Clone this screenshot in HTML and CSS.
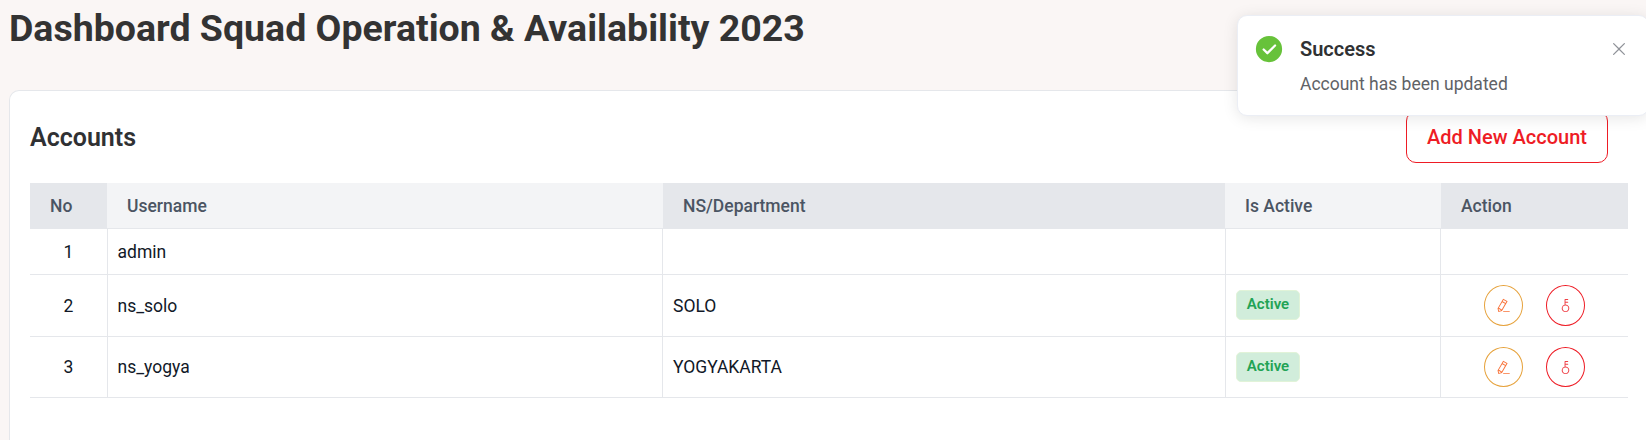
FILE: index.html
```html
<!DOCTYPE html>
<html lang="en">
<head>
<meta charset="utf-8">
<title>Dashboard Squad Operation &amp; Availability 2023</title>
<link rel="stylesheet" href="styles.css">
</head>
<body>
<svg class="sprite" aria-hidden="true">
  <symbol id="pen" viewBox="0 0 1024 1024"><path d="m199.04 672.64 193.984 112 224-387.968-193.92-112-224 388.032zm-23.872 60.16 32.896 148.288 144.896-45.696L175.168 732.8zM455.04 229.248l193.92 112 56.704-98.112-193.984-112-56.64 98.112zM104.32 708.8l384-665.024 304.768 175.936L409.152 884.8h.064l-248.448 78.336L104.32 708.8zm384 254.272v-64h448v64h-448z"/></symbol>
  <symbol id="key" viewBox="0 0 1024 1024"><path d="M448 456.064V96a32 32 0 0 1 32-32.064L672 64a32 32 0 0 1 0 64H512v128h160a32 32 0 0 1 0 64H512v128a256 256 0 1 1-64 8.064zM512 896a192 192 0 1 0 0-384 192 192 0 0 0 0 384z"/></symbol>
</svg>
<main class="page">
  <h1 class="page-title">Dashboard Squad Operation &amp; Availability 2023</h1>
  <section class="panel">
    <header class="panel-head">
      <h2 class="panel-title">Accounts</h2>
      <button class="add-button">Add New Account</button>
    </header>
    <table class="accounts">
      <colgroup><col class="c-no"><col class="c-user"><col class="c-dept"><col class="c-active"><col class="c-action"></colgroup>
      <thead>
        <tr><th>No</th><th>Username</th><th>NS/Department</th><th>Is Active</th><th>Action</th></tr>
      </thead>
      <tbody>
        <tr class="row-first"><td>1</td><td>admin</td><td></td><td></td><td></td></tr>
        <tr class="row-second"><td>2</td><td>ns_solo</td><td>SOLO</td><td><span class="tag">Active</span></td>
          <td><div class="actions"><button class="round edit" aria-label="Edit"><svg><use href="#pen"/></svg></button><button class="round reset" aria-label="Reset password"><svg><use href="#key"/></svg></button></div></td></tr>
        <tr class="row-third"><td>3</td><td>ns_yogya</td><td>YOGYAKARTA</td><td><span class="tag">Active</span></td>
          <td><div class="actions"><button class="round edit" aria-label="Edit"><svg><use href="#pen"/></svg></button><button class="round reset" aria-label="Reset password"><svg><use href="#key"/></svg></button></div></td></tr>
      </tbody>
    </table>
  </section>
</main>
<aside class="toast" role="alert">
  <svg class="toast-icon" viewBox="0 0 1024 1024"><path d="M512 64a448 448 0 1 1 0 896 448 448 0 0 1 0-896zm-55.808 536.384-99.52-99.584a38.4 38.4 0 1 0-54.336 54.336l126.72 126.72a38.272 38.272 0 0 0 54.336 0l262.4-262.464a38.4 38.4 0 1 0-54.272-54.336L456.192 600.384z"/></svg>
  <div class="toast-body">
    <h3 class="toast-title">Success</h3>
    <p class="toast-text">Account has been updated</p>
  </div>
  <svg class="toast-close" viewBox="0 0 1024 1024"><path d="M764.288 214.592 512 466.88 259.712 214.592a31.936 31.936 0 0 0-45.12 45.12L466.752 512 214.528 764.224a31.936 31.936 0 1 0 45.12 45.184L512 557.184l252.288 252.288a31.936 31.936 0 0 0 45.12-45.12L557.12 512.064l252.288-252.352a31.936 31.936 0 1 0-45.12-45.184z"/></svg>
</aside>
</body>
</html>
```
FILE: styles.css
```css
* { box-sizing: border-box; margin: 0; }
html { height: 100%; overflow: hidden; }
body {
  height: 440px;
  overflow: hidden;
  background: #faf6f5;
  color: #303133;
  font-family: Roboto, sans-serif;
  font-size: 17.5px;
}
button { font: inherit; padding: 0; background: #fff; }
.sprite { display: none; }
.page { display: flex; flex-direction: column; height: 440px; padding-left: 9px; }
.page-title { height: 90px; padding-top: 6px; font-size: 37.5px; line-height: 45px; font-weight: 700; color: #333; }
.panel {
  flex: 1;
  width: 1660px;
  padding: 20px 0 0 20px;
  border: 1px solid #e5e7eb;
  border-bottom: 0;
  border-radius: 10px 0 0 0;
  background: #fff;
}
.panel-head { display: flex; justify-content: space-between; align-items: center; width: 1578px; height: 52px; }
.panel-title { padding-top: 2px; font-size: 25px; line-height: 30px; font-weight: 600; }
.add-button {
  width: 202px;
  height: 52px;
  border: 1px solid #ee1c25;
  border-radius: 10px;
  color: #ee1c25;
  font-size: 20px;
  font-weight: 500;
}
.accounts { width: 1598px; margin-top: 20px; table-layout: fixed; border-collapse: separate; border-spacing: 0; }
.c-no { width: 77px; }
.c-user { width: 556px; }
.c-dept { width: 562px; }
.c-active { width: 216px; }
.c-action { width: 187px; }
.accounts th {
  height: 46px;
  padding: 0 20px;
  text-align: left;
  font-weight: 500;
  color: #4b5563;
  background: #e5e7eb;
  border-bottom: 1px solid #e5e7eb;
}
.accounts th:nth-child(even) { background: #f3f4f6; }
.accounts td { padding: 0 10px; color: #111827; border-bottom: 1px solid #e5e7eb; }
.accounts td:nth-child(even) { border: solid #e5e7eb; border-width: 0 1px 1px; }
.accounts td:nth-child(2) { padding-left: 9.5px; }
.accounts td:first-child { text-align: center; }
.row-first td { height: 46px; }
.row-second td { height: 62px; }
.row-third td { height: 61px; }
.tag {
  display: block;
  width: 64px;
  height: 30px;
  margin-bottom: 2px;
  border: 1px solid #e1f3d8;
  border-radius: 5px;
  background: #d1eddb;
  color: #22a355;
  font-size: 15px;
  line-height: 27px;
  font-weight: 600;
  text-align: center;
}
.row-third .tag { margin-bottom: 0; }
.actions { display: flex; justify-content: center; gap: 23px; }
.round { display: flex; align-items: center; justify-content: center; width: 39px; height: 41px; border: 1px solid; border-radius: 50%; }
.row-third .round { height: 40px; }
.round svg { width: 15px; height: 15px; fill: currentColor; }
.edit { border-color: #e6a23c; color: #f9733a; }
.reset { border-color: #ee1c25; color: #ef3f45; }
.toast {
  position: absolute;
  top: 15px;
  left: 1237px;
  display: flex;
  width: 412px;
  height: 101px;
  padding: 18px 19px 0 16px;
  border: 1px solid #ebeef5;
  border-radius: 10px;
  background: #fff;
  box-shadow: 0 2px 15px rgba(0, 0, 0, .1);
}
.toast-icon { width: 30px; height: 30px; fill: #67c23a; }
.toast-body { flex: 1; padding-left: 16px; }
.toast-title { font-size: 20px; line-height: 30px; font-weight: 600; }
.toast-text { margin-top: 7px; line-height: 26px; color: #606266; }
.toast-close { width: 20px; height: 20px; margin-top: 5px; fill: #909399; }
```
